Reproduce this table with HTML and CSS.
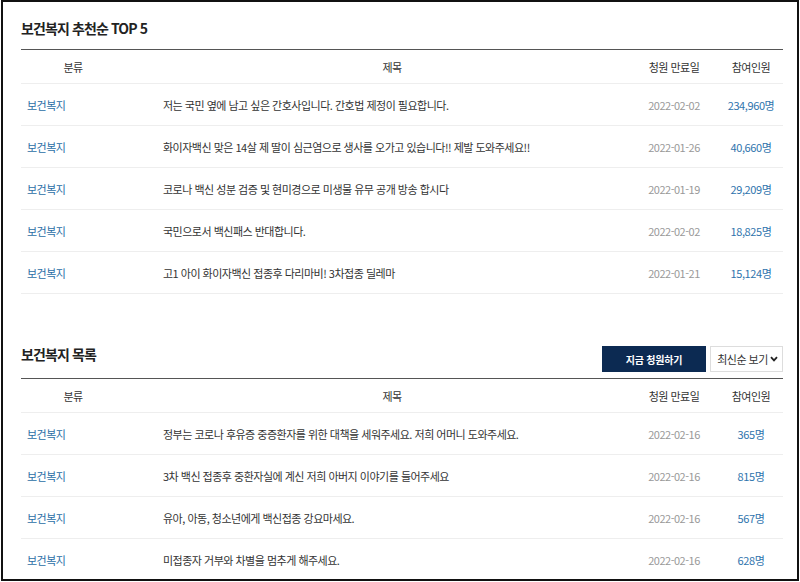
FILE: index.html
```html
<!DOCTYPE html>
<html lang="ko">
<head>
<meta charset="utf-8">
<link rel="stylesheet" href="styles.css">
</head>
<body>
<div class="frame">
  <section class="sec sec-top">
    <div class="head">
      <h2 class="title">보건복지 추천순 TOP 5</h2>
    </div>
    <div class="table">
      <div class="row hdr">
        <div class="c1">분류</div><div class="c2">제목</div><div class="c3">청원 만료일</div><div class="c4">참여인원</div>
      </div>
      <div class="row">
        <div class="c1 cat">보건복지</div><div class="c2 subj">저는 국민 옆에 남고 싶은 간호사입니다. 간호법 제정이 필요합니다.</div><div class="c3 date">2022-02-02</div><div class="c4 num">234,960명</div>
      </div>
      <div class="row">
        <div class="c1 cat">보건복지</div><div class="c2 subj">화이자백신 맞은 14살 제 딸이 심근염으로 생사를 오가고 있습니다!! 제발 도와주세요!!</div><div class="c3 date">2022-01-26</div><div class="c4 num">40,660명</div>
      </div>
      <div class="row">
        <div class="c1 cat">보건복지</div><div class="c2 subj">코로나 백신 성분 검증 및 현미경으로 미생물 유무 공개 방송 합시다</div><div class="c3 date">2022-01-19</div><div class="c4 num">29,209명</div>
      </div>
      <div class="row">
        <div class="c1 cat">보건복지</div><div class="c2 subj">국민으로서 백신패스 반대합니다.</div><div class="c3 date">2022-02-02</div><div class="c4 num">18,825명</div>
      </div>
      <div class="row">
        <div class="c1 cat">보건복지</div><div class="c2 subj">고1 아이 화이자백신 접종후 다리마비! 3차접종 딜레마</div><div class="c3 date">2022-01-21</div><div class="c4 num">15,124명</div>
      </div>
    </div>
  </section>

  <section class="sec sec-list">
    <div class="head head-list">
      <h2 class="title">보건복지 목록</h2>
      <div class="actions">
        <button class="btn">지금 청원하기</button>
        <div class="select">최신순 보기
          <svg class="chev" width="8" height="6" viewBox="0 0 8 6"><polyline points="1,1.2 4,4.4 7,1.2" fill="none" stroke="#222" stroke-width="1.8"/></svg>
        </div>
      </div>
    </div>
    <div class="table">
      <div class="row hdr">
        <div class="c1">분류</div><div class="c2">제목</div><div class="c3">청원 만료일</div><div class="c4">참여인원</div>
      </div>
      <div class="row">
        <div class="c1 cat">보건복지</div><div class="c2 subj">정부는 코로나 후유증 중증환자를 위한 대책을 세워주세요. 저희 어머니 도와주세요.</div><div class="c3 date">2022-02-16</div><div class="c4 num">365명</div>
      </div>
      <div class="row">
        <div class="c1 cat">보건복지</div><div class="c2 subj">3차 백신 접종후 중환자실에 계신 저희 아버지 이야기를 들어주세요</div><div class="c3 date">2022-02-16</div><div class="c4 num">815명</div>
      </div>
      <div class="row">
        <div class="c1 cat">보건복지</div><div class="c2 subj">유아, 아동, 청소년에게 백신접종 강요마세요.</div><div class="c3 date">2022-02-16</div><div class="c4 num">567명</div>
      </div>
      <div class="row">
        <div class="c1 cat">보건복지</div><div class="c2 subj">미접종자 거부와 차별을 멈추게 해주세요.</div><div class="c3 date">2022-02-16</div><div class="c4 num">628명</div>
      </div>
    </div>
  </section>
</div>
</body>
</html>
```
FILE: styles.css
```css
html, body {
  margin: 0;
  padding: 0;
  background: #fff;
}
body {
  font-family: "Noto Sans CJK KR", "Noto Sans", sans-serif;
  color: #333;
}
.frame {
  box-sizing: border-box;
  width: 798px;
  height: 581px;
  margin-left: 1px;
  border: 2px solid #111;
  padding: 16px 14px 0 18px;
  overflow: hidden;
}
.head {
  display: flex;
  align-items: flex-end;
  justify-content: space-between;
}
.title {
  margin: 0;
  font-size: 14px;
  line-height: 20px;
  font-weight: 700;
  color: #222;
  letter-spacing: -0.9px;
}
.sec-top .head {
  margin-bottom: 11px;
}
.sec-list {
  margin-top: 50px;
}
.head-list {
  margin-bottom: 6px;
}
.head-list .title {
  margin-bottom: 8px;
}
.actions {
  display: flex;
  gap: 4px;
}
.btn {
  width: 104px;
  height: 26px;
  border: 0;
  padding: 0;
  background: #0c2a52;
  color: #fff;
  font-family: inherit;
  font-size: 10px;
  font-weight: 700;
  letter-spacing: -0.2px;
}
.select {
  box-sizing: border-box;
  width: 73px;
  height: 26px;
  border: 1px solid #ddd;
  display: flex;
  align-items: center;
  justify-content: center;
  gap: 2px;
  padding-left: 2px;
  font-size: 11px;
  letter-spacing: -0.5px;
  color: #333;
}
.table {
  border-top: 1px solid #555;
}
.row {
  box-sizing: border-box;
  display: grid;
  grid-template-columns: 104px 1fr 106px 48px;
  padding-right: 8px;
  height: 42px;
  align-items: center;
  border-bottom: 1px solid #eee;
  font-size: 11px;
  letter-spacing: -0.5px;
}
.row.hdr {
  height: 34px;
  color: #333;
}
.hdr > div {
  text-align: center;
}
.hdr .c2 {
  padding-left: 38px;
}
.cat {
  padding-left: 6px;
  color: #2b6ea6;
}
.subj {
  padding-left: 38px;
  color: #333;
  white-space: nowrap;
}
.date {
  text-align: center;
  color: #999;
}
.num {
  text-align: center;
  color: #2f74ad;
  white-space: nowrap;
  letter-spacing: -0.4px;
}
```
